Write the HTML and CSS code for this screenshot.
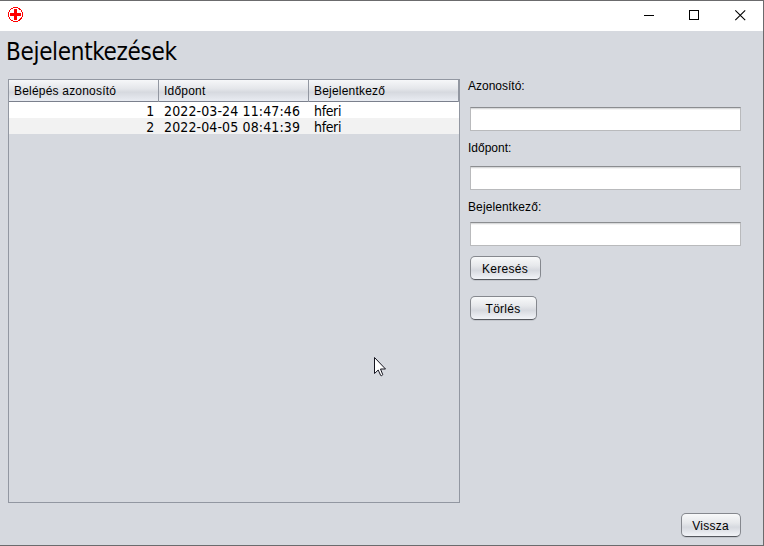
FILE: index.html
```html
<!DOCTYPE html>
<html lang="hu">
<head>
<meta charset="utf-8">
<title>Bejelentkezések</title>
<link rel="stylesheet" href="styles.css">
</head>
<body>
<div class="window">
  <header class="titlebar">
    <svg class="logo" width="16" height="16" viewBox="0 0 16 16" shape-rendering="crispEdges"><circle cx="7.500" cy="7.500" r="7" fill="none" stroke="#f00" stroke-width="1"/><path d="M6 2h3v4h4v3H9v4H6V9H2V6h4z" fill="#f00"/></svg>
    <div class="controls">
      <svg width="46" height="30" shape-rendering="crispEdges"><path d="M18 14h10v1H18z"/></svg>
      <svg width="46" height="30" shape-rendering="crispEdges"><path d="M17.500 9.500h9v9h-9z" fill="none" stroke="#000"/></svg>
      <svg width="46" height="30"><path d="M17.300 9.300l9.900 9.900M27.200 9.300l-9.900 9.900" fill="none" stroke="#000" stroke-width="1.100"/></svg>
    </div>
  </header>
  <main class="content">
    <h1>Bejelentkezések</h1>
    <div class="columns">
      <div class="table">
        <div class="row head"><span>Belépés azonosító</span><span>Időpont</span><span>Bejelentkező</span></div>
        <div class="row"><span class="num">1</span><span class="time">2022-03-24 11:47:46</span><span>hferi</span></div>
        <div class="row alt"><span class="num">2</span><span class="time">2022-04-05 08:41:39</span><span>hferi</span></div>
      </div>
      <form class="search">
        <label for="id" class="first">Azonosító:</label>
        <input id="id" type="text">
        <label for="time" class="second">Időpont:</label>
        <input id="time" type="text">
        <label for="user" class="third">Bejelentkező:</label>
        <input id="user" type="text">
        <button type="button" class="find">Keresés</button>
        <button type="button" class="delete">Törlés</button>
      </form>
    </div>
    <footer><button type="button" class="back">Vissza</button></footer>
  </main>
  <svg class="cursor" width="13" height="20" viewBox="0 0 13 20"><path d="M.5.5v16l3.700-3.500 2.500 5.500c.8.500 2-.1 2-1L6.500 12h5z" fill="#fff" stroke="#15151f"/></svg>
</div>
</body>
</html>
```

FILE: styles.css
```css
* { box-sizing: border-box; }
body { margin: 0; font: 12px/14px "Liberation Sans", Arial, sans-serif; color: #000; overflow: hidden; }
.window {
  position: relative;
  width: 764px;
  height: 546px;
  display: flex;
  flex-direction: column;
  background: #d6d9df;
  border: solid #6b6b6d;
  border-width: 1px 1px 1px 0;
}
.titlebar { height: 30px; flex: none; display: flex; justify-content: space-between; background: #fff; padding-left: 8px; }
.logo { margin-top: 6px; }
.controls { display: flex; margin-right: -1px; }
.controls svg { display: block; }
.content { flex: 1; display: flex; flex-direction: column; }
h1 {
  margin: 0;
  padding: 6px 0 0 6px;
  height: 48px;
  font: 24px/30px "DejaVu Sans Condensed", "DejaVu Sans", sans-serif;
  font-stretch: condensed;
  letter-spacing: -0.32px;
}
.columns { display: flex; height: 424px; padding-left: 8px; }
.table { width: 452px; height: 424px; border: 1px solid #9297a1; }
.row {
  display: grid;
  grid-template-columns: 150px 150px 150px;
  height: 16px;
  background: #fff;
  font: 14px/19px "DejaVu Sans Condensed", "DejaVu Sans", sans-serif;
  font-stretch: condensed;
  letter-spacing: -0.35px;
}
.row span { padding: 0 5px; white-space: nowrap; }
.row .num { text-align: right; }
.row .time { letter-spacing: 0.12px; }
.alt { background: #f2f2f2; }
.head {
  height: 22px;
  font: 12px/22px "Liberation Sans", Arial, sans-serif;
  letter-spacing: 0.2px;
  background: linear-gradient(#f6f7f9, #e4e6ea 42%, #d6d9df 58%, #e9ecf2);
  border-bottom: 1px solid #7b808d;
}
.head span { border-right: 1px solid #9297a1; }
.search { margin-left: 10px; width: 271px; display: flex; flex-direction: column; }
label { margin-left: -2px; height: 14px; }
.first { margin-bottom: 14px; }
.second { margin: 10px 0 11px -2px; }
.third { margin: 10px 0 8px -2px; letter-spacing: 0.1px; }
input {
  display: block;
  width: 271px;
  height: 24px;
  padding: 0 5px;
  background: linear-gradient(#d9dadb 0 1px, #f4f4f4 1px 2px, #fff 2px);
  border: 1px solid #b9babc;
  border-top-color: #8b8d90;
  border-radius: 0;
  font: inherit;
}
button {
  display: block;
  height: 24px;
  padding: 1px 1px 0 0;
  border: 1px solid #85888e;
  border-bottom-color: #55585e;
  border-radius: 5px;
  background: linear-gradient(#f8f9fa, #e6e8eb 40%, #d6d9df 60%, #f2f4f8);
  box-shadow: 0 1px 0 #c3c6cc;
  font: 12px/20px "Liberation Sans", Arial, sans-serif;
  color: #000;
  letter-spacing: 0.25px;
}
.find { width: 71px; margin-top: 10px; }
.delete { width: 67px; margin-top: 16px; }
.back { width: 60px; }
footer { padding: 10px 0 0 681px; }
.cursor { position: absolute; left: 374px; top: 356px; }
```
